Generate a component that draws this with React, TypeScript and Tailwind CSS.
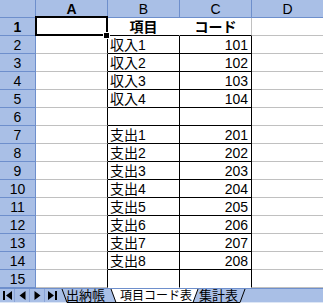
import React from "react";

type Row = { b?: string; c?: string; head?: boolean };

const rows: Row[] = [
  { b: "項目", c: "コード", head: true },
  { b: "収入1", c: "101" },
  { b: "収入2", c: "102" },
  { b: "収入3", c: "103" },
  { b: "収入4", c: "104" },
  {},
  { b: "支出1", c: "201" },
  { b: "支出2", c: "202" },
  { b: "支出3", c: "203" },
  { b: "支出4", c: "204" },
  { b: "支出5", c: "205" },
  { b: "支出6", c: "206" },
  { b: "支出7", c: "207" },
  { b: "支出8", c: "208" },
  {},
];

function NavButton({ kind, last }: { kind: "first" | "prev" | "next" | "last"; last?: boolean }) {
  return (
    <div className={`w-[15px] h-full flex items-center justify-center ${last ? "" : "border-r border-[#8aa4d8]"}`}>
      <svg width="11" height="11" viewBox="0 0 11 11">
        {kind === "first" && (
          <>
            <rect x="1" y="1" width="2" height="9" fill="#000" />
            <polygon points="10,1 4,5.5 10,10" fill="#000" />
          </>
        )}
        {kind === "prev" && <polygon points="8.5,1 2.5,5.5 8.5,10" fill="#000" />}
        {kind === "next" && <polygon points="2.5,1 8.5,5.5 2.5,10" fill="#000" />}
        {kind === "last" && (
          <>
            <polygon points="1,1 7,5.5 1,10" fill="#000" />
            <rect x="8" y="1" width="2" height="9" fill="#000" />
          </>
        )}
      </svg>
    </div>
  );
}

export default function App() {
  const font = { fontFamily: "'Liberation Sans', 'Noto Sans CJK JP', sans-serif" };
  const hdrFont = { fontFamily: "'Liberation Sans', sans-serif", fontSize: 14 };
  return (
    <div className="w-[323px] h-[303px] bg-white overflow-hidden text-[14px] leading-none text-black" style={font}>
      <div className="relative grid grid-cols-[36px_72px_72px_72px_71px] grid-rows-[18px_repeat(15,18px)]">
        {/* header row */}
        <div className="bg-[#a9bfe6] border-r border-b border-[#6e8fcc]" />
        {["A", "B", "C", "D"].map((l, i) => (
          <div
            key={l}
            className={`bg-[#a9bfe6] border-b border-[#6e8fcc] ${i < 3 ? "border-r" : ""} flex items-center justify-center pt-[1px] ${i === 0 ? "font-bold" : ""}`}
            style={hdrFont}
          >
            {l}
          </div>
        ))}
        {rows.map((r, idx) => {
          const n = idx + 1;
          const inTable = n >= 2;
          const bBottom = n <= 14 ? "border-b-black" : "border-b-transparent";
          return (
            <React.Fragment key={n}>
              <div
                className={`bg-[#a9bfe6] border-r border-b border-[#6e8fcc] flex items-center justify-center pt-[1px] ${n === 1 ? "font-bold" : ""}`}
                style={hdrFont}
              >
                {n}
              </div>
              <div className={`border-b border-b-[#c0c0c0] border-r ${inTable ? "border-r-black" : "border-r-[#c0c0c0]"}`} />
              <div
                className={`border-b ${bBottom} border-r ${inTable ? "border-r-black" : "border-r-white"} flex items-center pt-[1px] ${r.head ? "justify-center font-bold" : "pl-[2px]"}`}
              >
                {r.b}
              </div>
              <div
                className={`border-b ${bBottom} border-r ${inTable ? "border-r-black" : "border-r-[#c0c0c0]"} flex items-center pt-[1px] ${r.head ? "justify-center font-bold" : "justify-end pr-[3px]"}`}
              >
                {r.c}
              </div>
              <div className="border-b border-b-[#c0c0c0]" />
            </React.Fragment>
          );
        })}
        {/* active cell selection */}
        <div className="absolute left-[35px] top-[16px] w-[73px] h-[20px] border-2 border-black pointer-events-none" />
        <div className="absolute left-[104px] top-[33px] w-[5px] h-[5px] bg-black outline outline-1 outline-white pointer-events-none" />
      </div>
      {/* sheet tab bar */}
      <div className="h-[14px] flex bg-[#a9bfe6] border-t border-[#6e8fcc] text-[13px]">
        <div className="flex h-full w-[60px]">
          <NavButton kind="first" />
          <NavButton kind="prev" />
          <NavButton kind="next" />
          <NavButton kind="last" last />
        </div>
        <div className="relative flex h-full">
          <svg className="absolute left-0 top-0" width="190" height="14" viewBox="0 0 190 14">
            <line x1="2" y1="0" x2="7" y2="13.5" stroke="#000" strokeWidth="1" />
            <line x1="7" y1="13.5" x2="180" y2="13.5" stroke="#000" strokeWidth="1" />
            <line x1="180" y1="13.5" x2="185" y2="0" stroke="#000" strokeWidth="1" />
            <polygon points="51,0 138,0 133,13 56,13" fill="#fff" />
            <polyline points="51,0 56,13.5 133,13.5 138,0" fill="none" stroke="#000" strokeWidth="1" />
          </svg>
          <div className="relative w-[50px] pl-[6px] flex items-center">出納帳</div>
          <div className="relative w-[88px] pl-[10px] flex items-center text-[12px]">項目コード表</div>
          <div className="relative w-[50px] pl-[1px] flex items-center">集計表</div>
        </div>
      </div>
      <div className="h-[3px] bg-[#dde6f5]" />
    </div>
  );
}
